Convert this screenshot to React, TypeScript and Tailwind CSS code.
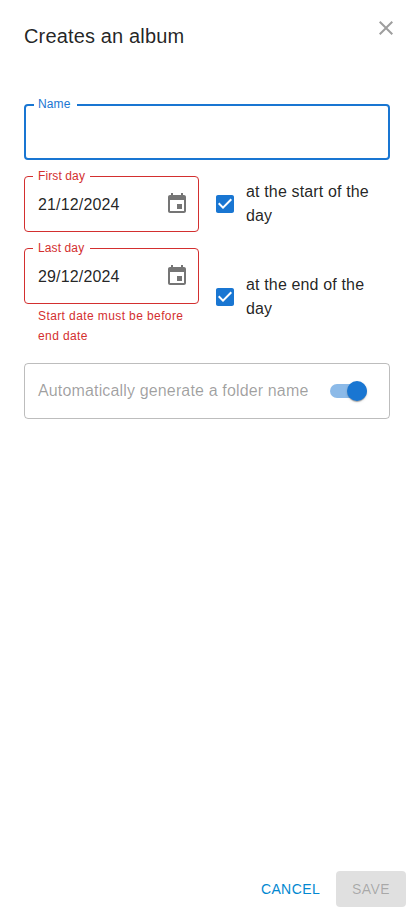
import type { ReactNode } from 'react';

function CheckIcon() {
  return (
    <svg viewBox="0 0 24 24" className="size-6 fill-[#1976d2]">
      <path d="M19 3H5c-1.11 0-2 .9-2 2v14c0 1.1.89 2 2 2h14c1.11 0 2-.9 2-2V5c0-1.1-.89-2-2-2zm-9 14l-5-5 1.41-1.41L10 14.17l7.59-7.59L19 8l-9 9z" />
    </svg>
  );
}

function CalendarIcon() {
  return (
    <svg viewBox="0 0 24 24" className="size-6 fill-black/54">
      <path d="M17 12h-5v5h5v-5zM16 1v2H8V1H6v2H5c-1.11 0-1.99.9-1.99 2L3 19c0 1.1.89 2 2 2h14c1.1 0 2-.9 2-2V5c0-1.1-.9-2-2-2h-1V1h-2zm3 18H5V8h14v11z" />
    </svg>
  );
}

function DateField({ label, value, helper }: { label: string; value: string; helper?: string }) {
  return (
    <div className="w-[175px] shrink-0">
      <fieldset className="h-14 rounded border border-[#d32f2f]">
        <legend className="ml-2 h-0 w-[57px] pl-[5px] text-xs leading-0 tracking-[0.11px] whitespace-nowrap text-[#d32f2f]">
          <span className="block -translate-y-px">{label}</span>
        </legend>
        <div className="flex h-[54px] items-center justify-between pr-[9px] pl-[13px]">
          <span className="pt-0.5">{value}</span>
          <CalendarIcon />
        </div>
      </fieldset>
      {helper && (
        <p className="mx-3.5 mt-[3px] text-xs leading-[19.92px] tracking-[0.4px] text-[#d32f2f]">{helper}</p>
      )}
    </div>
  );
}

function DayCheckbox({ children }: { children: ReactNode }) {
  return (
    <label className="flex flex-1 items-center">
      <span className="mr-[9px] ml-3.5">
        <CheckIcon />
      </span>
      <span className="flex-1">{children}</span>
    </label>
  );
}

export default function App() {
  return (
    <div className="flex h-[915px] w-[414px] flex-col bg-white font-['Liberation_Sans',sans-serif] text-base leading-6 tracking-[0.15px] text-black/87">
      <header className="flex h-[104px] items-start justify-between pt-4 pr-4 pl-6">
        <h1 className="mt-1 text-xl leading-8 tracking-[0.15px]">Creates an album</h1>
        <button type="button" aria-label="Close">
          <svg viewBox="0 0 24 24" className="size-6 fill-[#9e9e9e]">
            <path d="M19 6.41L17.59 5 12 10.59 6.41 5 5 6.41 10.59 12 5 17.59 6.41 19 12 13.41 17.59 19 19 17.59 13.41 12z" />
          </svg>
        </button>
      </header>
      <main className="flex flex-1 flex-col gap-4 pr-6 pl-6">
        <fieldset className="h-14 shrink-0 rounded border-2 border-[#1976d2]">
          <legend className="ml-2 h-0 w-[43px] pl-1 text-xs leading-0 tracking-[0.11px] text-[#1976d2]">
            <span className="block -translate-y-px">Name</span>
          </legend>
        </fieldset>
        <div className="flex">
          <DateField label="First day" value="21/12/2024" />
          <DayCheckbox>at the start of the day</DayCheckbox>
        </div>
        <div className="flex">
          <DateField label="Last day" value="29/12/2024" helper="Start date must be before end date" />
          <DayCheckbox>at the end of the day</DayCheckbox>
        </div>
        <div className="flex h-14 items-center justify-between rounded border border-black/26 pr-[22px] pl-[13px]">
          <span className="text-black/38">Automatically generate a folder name</span>
          <span className="flex h-3.5 w-[37px] items-center justify-end rounded-full bg-[#8cbae8]">
            <span className="size-5 rounded-full bg-[#1976d2] shadow-[0px_2px_1px_-1px_rgba(0,0,0,0.2),0px_1px_1px_0px_rgba(0,0,0,0.14),0px_1px_3px_0px_rgba(0,0,0,0.12)]" />
          </span>
        </div>
      </main>
      <footer className="flex items-center justify-end gap-2 p-2 text-sm leading-[24.5px] tracking-[0.4px]">
        <button type="button" className="h-9 px-2 text-[#0288d1]">CANCEL</button>
        <button type="button" className="h-9 rounded bg-black/12 px-4 text-black/26">SAVE</button>
      </footer>
    </div>
  );
}
